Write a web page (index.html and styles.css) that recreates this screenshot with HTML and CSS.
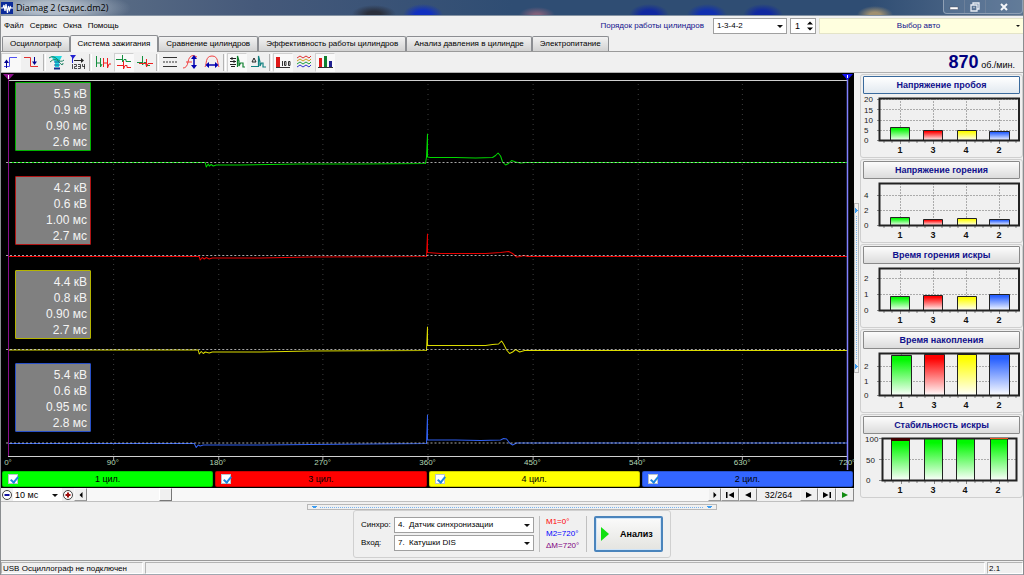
FILE: index.html
```html
<!DOCTYPE html>
<html lang="ru">
<head>
<meta charset="utf-8">
<title>Diamag 2 (сздис.dm2)</title>
<link rel="stylesheet" href="styles.css">
</head>
<body>
<div class="window">
  <header class="titlebar">
    <svg class="app-icon" viewBox="0 0 12 12" aria-hidden="true"><rect width="12" height="12" fill="#0a2a9a"/><path d="M0 6H2L3 3 4 9 5 2 6.500 11 7.500 4 8.500 8 9.500 5 10 6H12" fill="none" stroke="#fff" stroke-width="1.200"/></svg>
    <h1 class="title">Diamag 2 (сздис.dm2)</h1>
    <div class="win-buttons">
      <button class="win-btn" aria-label="Свернуть"><svg viewBox="0 0 12 12"><rect x="2" y="6" width="8" height="2.500" fill="#fff" stroke="#445" stroke-width=".4"/></svg></button>
      <button class="win-btn" aria-label="Развернуть"><svg viewBox="0 0 12 12"><path d="M4 4V2H10V8H8M2 4H8V10H2ZM4.500 6.500H5.500" fill="none" stroke="#e8edf4" stroke-width="1.300"/></svg></button>
      <button class="win-btn win-close" aria-label="Закрыть"><svg viewBox="0 0 12 12"><path d="M3 3L9 9M9 3L3 9" stroke="#f4f6fa" stroke-width="2"/></svg></button>
    </div>
  </header>

  <div class="menubar">
    <nav class="menu">
      <a href="#file">Файл</a><a href="#service">Сервис</a><a href="#windows">Окна</a><a href="#help">Помощь</a>
    </nav>
    <label class="order-label" for="order">Порядок работы цилиндров</label>
    <span class="combo combo-order"><select id="order"><option>1-3-4-2</option></select></span>
    <span class="spinner"><input type="text" value="1" aria-label="Номер цилиндра"><svg viewBox="0 0 8 12" aria-hidden="true"><path d="M1 4.500L4 1.500 7 4.500ZM1 7.500L4 10.500 7 7.500Z"/></svg></span>
    <button class="car-btn">Выбор авто</button>
  </div>

  <div class="tabs" role="tablist">
    <button class="tab" role="tab">Осциллограф</button>
    <button class="tab tab-active" role="tab" aria-selected="true">Система зажигания</button>
    <button class="tab" role="tab">Сравнение цилиндров</button>
    <button class="tab" role="tab">Эффективность работы цилиндров</button>
    <button class="tab" role="tab">Анализ давления в цилиндре</button>
    <button class="tab" role="tab">Электропитание</button>
  </div>

  <div class="toolbar">
    <button class="tool pressed" aria-label="Передний фронт"><svg viewBox="0 0 18 16"><path d="M2 12.500H7.500V3.500H15" fill="none" stroke="#5050f0"/><path d="M4.500 14V8" stroke="#000090"/><path d="M2 9L4.500 5.500 7 9Z" fill="#000090"/></svg></button>
    <button class="tool" aria-label="Задний фронт"><svg viewBox="0 0 18 16"><path d="M1 3.500H7.500V12.500H15" fill="none" stroke="#e03030"/><path d="M11.500 3V8" stroke="#000090"/><path d="M9 7.500L11.500 11 14 7.500Z" fill="#000090"/></svg></button>
    <span class="sep"></span>
    <button class="tool" aria-label="Синхронизация"><svg viewBox="0 0 18 16"><path d="M3 2H14L11 8V13H7V8Z" fill="#20d8e0"/><path d="M1 4Q5 1 9 5T16 6M2 8Q7 3 11 8T15 9" fill="none" stroke="#188060"/><path d="M6 8H12M6 11H12" stroke="#1060a0"/><path d="M6 14.500H12" stroke="#103090" stroke-width="2"/></svg></button>
    <button class="tool" aria-label="Порядок 1234"><svg viewBox="0 0 18 16"><path d="M1 1H7L4 5Z" fill="#2020d0"/><path d="M3.500 4V9" stroke="#2020d0"/><path d="M5 6.500H13" stroke="#222"/><path d="M12 4L15 6.500 12 9Z" fill="#222"/><path d="M3.500 10V15M5 10.500H7.500V12.500H5.500V14.500H8M9 10.500H11.500V14.500H9M9 12.500H11.500M13.500 10V12.500H16M15.500 10V15" fill="none" stroke="#222" stroke-width=".8"/></svg></button>
    <span class="sep"></span>
    <button class="tool" aria-label="Последовательно"><svg viewBox="0 0 18 16"><path d="M2.500 13V2M2.500 9H6.500M6.500 4V13L8 10" fill="none" stroke="#159040"/><path d="M9.500 13V4M9.500 9H13.500M13.500 4V14L15 10H17" fill="none" stroke="#f02020"/></svg></button>
    <button class="tool pressed" aria-label="Друг под другом"><svg viewBox="0 0 18 16"><path d="M1 5.500H7.500V1V8L9 5.500H11V7.500H16" fill="none" stroke="#159040"/><path d="M2 11.500H8.500V7V15L10 11.500H12V13.500H16" fill="none" stroke="#f02020"/></svg></button>
    <button class="tool" aria-label="Наложение"><svg viewBox="0 0 18 16"><path d="M1 8.500H6.500V2V11L8 8.500H10V11.500H14" fill="none" stroke="#159040"/><path d="M3 9.500H10.500V5V13L12 9.500H17" fill="none" stroke="#f02020"/></svg></button>
    <span class="sep"></span>
    <button class="tool" aria-label="Линии"><svg viewBox="0 0 18 16"><path d="M2 3.500H16M2 12.500H16" stroke="#333"/><path d="M2 8H16" stroke="#333" stroke-dasharray="2 1"/></svg></button>
    <button class="tool" aria-label="Масштаб по высоте"><svg viewBox="0 0 18 16"><path d="M1 14Q5 14 6 8T11 1.500Q13 2 15 3M4 8H10" fill="none" stroke="#f04040"/><path d="M12 3V13" stroke="#0000b0" stroke-width="1.500"/><path d="M9 5L12 1 15 5ZM9 11L12 15 15 11Z" fill="#0000b0"/></svg></button>
    <button class="tool" aria-label="Масштаб по ширине"><svg viewBox="0 0 18 16"><path d="M2 13C4 10 2 2 9 2S14 10 16 13" fill="none" stroke="#f04040"/><path d="M5 11H13" stroke="#0000b0" stroke-width="1.500"/><path d="M6 8L2.500 11 6 14ZM12 8L15.500 11 12 14Z" fill="#0000b0"/></svg></button>
    <span class="sep"></span>
    <button class="tool pressed" aria-label="Значения"><svg viewBox="0 0 18 16"><path d="M9.500 13V2L11 7V12L12.500 9H15V13H17" fill="none" stroke="#108030" stroke-width="1.200"/><path d="M2 4.500H8M2 7.500H8M4 3V6M6 6V9M2 10.500H8M3 12.500H7" fill="none" stroke="#222"/></svg></button>
    <button class="tool" aria-label="Разность"><svg viewBox="0 0 18 16"><path d="M2 12.500H9.500V2L11 8V12L12.500 9H14V13H17" fill="none" stroke="#108080" stroke-width="1.200"/><path d="M3 8L5 4 7 8Z" fill="none" stroke="#222"/></svg></button>
    <span class="sep"></span>
    <button class="tool pressed" aria-label="Таблица"><svg viewBox="0 0 18 16"><path d="M2 3H6V13H2Z" fill="#e01818"/><path d="M2 13.500H16M8.500 7V12M10.500 7.500H12V11.500H10.500ZM14.500 7.500V11.500H16V7.500Z" fill="none" stroke="#333"/></svg></button>
    <button class="tool" aria-label="Волны"><svg viewBox="0 0 18 16"><g fill="none"><path d="M2 4L5 2 8 4 11 2 14 4 16 2" stroke="#e03030"/><path d="M2 7L5 5 8 7 11 5 14 7 16 5" stroke="#d0a020"/><path d="M2 10L5 8 8 10 11 8 14 10 16 8" stroke="#20a040"/><path d="M2 13L5 11 8 13 11 11 14 13 16 11" stroke="#3030d0"/></g></svg></button>
    <button class="tool pressed" aria-label="Диаграммы"><svg viewBox="0 0 18 16"><rect x="3" y="4" width="3" height="9" fill="#e01818"/><rect x="8" y="2" width="3" height="11" fill="#108030"/><rect x="13" y="7" width="3" height="6" fill="#202090"/><path d="M2 13.500H17" stroke="#333"/></svg></button>
    <p class="rpm"><strong>870</strong> об./мин.</p>
  </div>

  <main class="main">
    <section class="left">
      <div class="scope">
        <svg class="plot" viewBox="1 73 852 397" preserveAspectRatio="none" aria-hidden="true">
          <path d="M113.500 84V460M218.500 84V460M322.500 84V460M427.500 84V460M532.500 84V460M637.500 84V460M741.500 84V460" stroke="#3c3c3c" stroke-dasharray="1 4"/>
          <path d="M8 80.500H847M8 456.500H847" stroke="#d0d0d0"/>
          <path d="M113.500 457V460M218.500 457V460M322.500 457V460M427.500 457V460M532.500 457V460M637.500 457V460M741.500 457V460" stroke="#aaa"/>
          <g fill="none" stroke-linejoin="round">
            <path stroke="#00d800" d="M8 162.500H205L206 167 208 164 209 166 211 164.500 213 166 216 165H240L300 164H360L425 163.500 426 157 427 134V157L430 157.500H455L475 158 492 157.500 495 155.500 497.500 153 500 156 502 162 505 165 508 163.500 511 160.500 515 162 520 163 525 162.500H847"/>
            <path stroke="#e80000" d="M8 256.500H199L200 260 202 257.500 204 259 206 257.500 209 259 212 258H260L310 257 426 256.500 427 234V252.500L440 253.500H485L500 252.500 508 251.500 512 253.500 516 257 520 256.500 523 255.500 527 256.500H847"/>
            <path stroke="#dcdc00" d="M8 350H198L199 354 201 351.500 203 353.500 205 352 209 353 212 352H260L310 351 426 350.500 427 327V345.500H485L492 344.500 498 344 501 341 503 344 506 350 509 353.500 512 352 515 349.500 519 352 524 350.500H847"/>
            <path stroke="#3060f0" d="M8 443.500H194L196 447.500 198 445 200 446 203 445H260L310 444.500 426 443.500 427 415V440H455L480 440.500 500 440 503 438.500 506 439 509 443 512 445 516 443H847"/>
          </g>
          <path d="M6 162.500H847M6 255.500H847M6 349.500H847M6 443H847" stroke="#ddd" stroke-dasharray="2 2" stroke-opacity=".75"/>
          <path d="M8.500 77V456" stroke="#8c108c"/><path d="M3 74H14L8.500 80Z" fill="#8c108c"/><path d="M8.500 75V79" stroke="#fff"/>
          <path d="M846.500 79V470" stroke="#8080ff" stroke-width="1.500"/><path d="M841 74H852L846.500 80Z" fill="#1010f0"/><path d="M846.500 75V78" stroke="#fff"/>
        </svg>
        <div class="readouts">
          <div class="slot"><p class="readout c1">5.5 кВ<br>0.9 кВ<br>0.90 мс<br>2.6 мс</p></div>
          <div class="slot"><p class="readout c3">4.2 кВ<br>0.6 кВ<br>1.00 мс<br>2.7 мс</p></div>
          <div class="slot"><p class="readout c4">4.4 кВ<br>0.8 кВ<br>0.90 мс<br>2.7 мс</p></div>
          <div class="slot"><p class="readout c2">5.4 кВ<br>0.6 кВ<br>0.95 мс<br>2.8 мс</p></div>
        </div>
        <div class="axis"><span>0°</span><span>90°</span><span>180°</span><span>270°</span><span>360°</span><span>450°</span><span>540°</span><span>630°</span><span>720°</span></div>
      </div>
      <div class="cylinders">
        <label class="cyl cyl1"><input type="checkbox" checked><span>1 цил.</span></label>
        <label class="cyl cyl3"><input type="checkbox" checked><span>3 цил.</span></label>
        <label class="cyl cyl4"><input type="checkbox" checked><span>4 цил.</span></label>
        <label class="cyl cyl2"><input type="checkbox" checked><span>2 цил.</span></label>
      </div>
      <div class="player">
        <button class="round" aria-label="Уменьшить"><svg viewBox="0 0 12 12"><circle cx="6" cy="6" r="4.500" fill="#fff" stroke="#444"/><path d="M3.500 6H8.500" stroke="#1010a0" stroke-width="2"/></svg></button>
        <span class="combo combo-scale"><select aria-label="Развёртка"><option>10 мс</option></select></span>
        <button class="round" aria-label="Увеличить"><svg viewBox="0 0 12 12"><circle cx="6" cy="6" r="4.500" fill="#fff" stroke="#444"/><path d="M3.500 6H8.500M6 3.500V8.500" stroke="#a01010" stroke-width="2"/></svg></button>
        <button class="step" aria-label="Влево"><svg viewBox="0 0 12 12"><path d="M7.500 3L4.500 6 7.500 9Z"/></svg></button>
        <div class="track"><span class="thumb"></span></div>
        <button class="step" aria-label="Вправо"><svg viewBox="0 0 12 12"><path d="M4.500 3L7.500 6 4.500 9Z"/></svg></button>
        <button class="step wide" aria-label="В начало"><svg viewBox="0 0 12 12"><path d="M2 3H3.500V9H2ZM10 3L4.500 6 10 9Z"/></svg></button>
        <button class="step wide" aria-label="Назад"><svg viewBox="0 0 12 12"><path d="M9 3L3 6 9 9Z"/></svg></button>
        <output class="frame">32/264</output>
        <button class="step wide" aria-label="Вперёд"><svg viewBox="0 0 12 12"><path d="M3 3L9 6 3 9Z"/></svg></button>
        <button class="step wide" aria-label="В конец"><svg viewBox="0 0 12 12"><path d="M8.500 3H10V9H8.500ZM2 3L7.500 6 2 9Z"/></svg></button>
        <button class="step wide" aria-label="Пуск"><svg viewBox="0 0 12 12"><path d="M3 3L9 6 3 9Z" fill="#108a10"/></svg></button>
      </div>
    </section>

    <div class="vsplit"><i class="vgrip"></i></div>

    <svg class="defs" aria-hidden="true"><defs>
      <linearGradient id="g1" x2="0" y2="1"><stop offset=".1" stop-color="#00f800"/><stop offset="1" stop-color="#fff"/></linearGradient>
      <linearGradient id="g3" x2="0" y2="1"><stop offset=".1" stop-color="#ff0000"/><stop offset="1" stop-color="#fff"/></linearGradient>
      <linearGradient id="g4" x2="0" y2="1"><stop offset=".1" stop-color="#ffff00"/><stop offset="1" stop-color="#fff"/></linearGradient>
      <linearGradient id="g2" x2="0" y2="1"><stop offset=".1" stop-color="#2860ff"/><stop offset="1" stop-color="#fff"/></linearGradient>
    </defs></svg>

    <aside class="side">
      <section class="group">
        <button class="group-btn focused">Напряжение пробоя</button>
        <svg class="chart" viewBox="0 0 160 62">
          <path class="grid" d="M19 5.500H158M19 15.500H158M19 26.500H158M19 36.500H158M39.500 4V46M72.500 4V46M105.500 4V46M138.500 4V46"/>
          <path class="ticks" d="M16 5.500H19M16 15.500H19M16 26.500H19M16 36.500H19M16 46.500H19M23 47V49M31 47V49M39.500 47V50M48 47V49M56 47V49M64 47V49M72.500 47V50M81 47V49M89 47V49M97 47V49M105.500 47V50M114 47V49M122 47V49M130 47V49M138.500 47V50M147 47V49M155 47V49"/>
          <g class="bars"><path fill="url(#g1)" d="M29.500 33.500h19v13h-19z"/><path fill="url(#g3)" d="M62.500 36.500h19v10h-19z"/><path fill="url(#g4)" d="M96.500 36.500h19v10h-19z"/><path fill="url(#g2)" d="M128.500 37.500h20v9h-20z"/></g>
          <path class="frame-line" d="M18.500 4.500H158V46.500H18.500Z"/>
          <g class="yt"><text x="3" y="8">20</text><text x="3" y="19">15</text><text x="3" y="29">10</text><text x="3" y="39">5</text><text x="3" y="49">0</text></g>
          <g class="xt"><text x="39" y="59">1</text><text x="72" y="59">3</text><text x="105" y="59">4</text><text x="138" y="59">2</text></g>
        </svg>
      </section>
      <section class="group">
        <button class="group-btn">Напряжение горения</button>
        <svg class="chart" viewBox="0 0 160 62">
          <path class="grid" d="M19 16.500H158M19 31.500H158M39.500 4V46M72.500 4V46M105.500 4V46M138.500 4V46"/>
          <path class="ticks" d="M16 16.500H19M16 31.500H19M16 46.500H19M23 47V49M31 47V49M39.500 47V50M48 47V49M56 47V49M64 47V49M72.500 47V50M81 47V49M89 47V49M97 47V49M105.500 47V50M114 47V49M122 47V49M130 47V49M138.500 47V50M147 47V49M155 47V49"/>
          <g class="bars"><path fill="url(#g1)" d="M29.500 38.500h19v8h-19z"/><path fill="url(#g3)" d="M62.500 40.500h19v6h-19z"/><path fill="url(#g4)" d="M96.500 39.500h19v7h-19z"/><path fill="url(#g2)" d="M128.500 40.500h20v6h-20z"/></g>
          <path class="frame-line" d="M18.500 4.500H158V46.500H18.500Z"/>
          <g class="yt"><text x="3" y="19">4</text><text x="3" y="34">2</text><text x="3" y="49">0</text></g>
          <g class="xt"><text x="39" y="59">1</text><text x="72" y="59">3</text><text x="105" y="59">4</text><text x="138" y="59">2</text></g>
        </svg>
      </section>
      <section class="group">
        <button class="group-btn">Время горения искры</button>
        <svg class="chart" viewBox="0 0 160 62">
          <path class="grid" d="M19 14.500H158M19 30.500H158M39.500 4V46M72.500 4V46M105.500 4V46M138.500 4V46"/>
          <path class="ticks" d="M16 14.500H19M16 30.500H19M16 46.500H19M23 47V49M31 47V49M39.500 47V50M48 47V49M56 47V49M64 47V49M72.500 47V50M81 47V49M89 47V49M97 47V49M105.500 47V50M114 47V49M122 47V49M130 47V49M138.500 47V50M147 47V49M155 47V49"/>
          <g class="bars"><path fill="url(#g1)" d="M29.500 32.500h19v14h-19z"/><path fill="url(#g3)" d="M62.500 31.500h19v15h-19z"/><path fill="url(#g4)" d="M96.500 32.500h19v14h-19z"/><path fill="url(#g2)" d="M128.500 30.500h20v16h-20z"/></g>
          <path class="frame-line" d="M18.500 4.500H158V46.500H18.500Z"/>
          <g class="yt"><text x="3" y="17">2</text><text x="3" y="33">1</text><text x="3" y="49">0</text></g>
          <g class="xt"><text x="39" y="59">1</text><text x="72" y="59">3</text><text x="105" y="59">4</text><text x="138" y="59">2</text></g>
        </svg>
      </section>
      <section class="group">
        <button class="group-btn">Время накопления</button>
        <svg class="chart" viewBox="0 0 160 62">
          <path class="grid" d="M19 17.500H158M19 32.500H158M40.500 4V46M73.500 4V46M105.500 4V46M138.500 4V46"/>
          <path class="ticks" d="M16 17.500H19M16 32.500H19M16 46.500H19M24 47V49M32 47V49M40.500 47V50M48 47V49M56 47V49M64 47V49M73.500 47V50M81 47V49M89 47V49M97 47V49M105.500 47V50M114 47V49M122 47V49M130 47V49M138.500 47V50M147 47V49M155 47V49"/>
          <g class="bars"><path fill="url(#g1)" d="M30.500 6.500h20v40h-20z"/><path fill="url(#g3)" d="M63.500 5.500h20v41h-20z"/><path fill="url(#g4)" d="M96.500 5.500h19v41h-19z"/><path fill="url(#g2)" d="M128.500 5.500h20v41h-20z"/></g>
          <path class="frame-line" d="M18.500 4.500H158V46.500H18.500Z"/>
          <g class="yt"><text x="3" y="20">2</text><text x="3" y="35">1</text><text x="3" y="49">0</text></g>
          <g class="xt"><text x="40" y="59">1</text><text x="73" y="59">3</text><text x="105" y="59">4</text><text x="138" y="59">2</text></g>
        </svg>
      </section>
      <section class="group">
        <button class="group-btn">Стабильность искры</button>
        <svg class="chart" viewBox="0 0 160 62">
          <path class="grid" d="M21 25.500H156"/>
          <path class="ticks" d="M18 4.500H21M18 25.500H21M18 46.500H21M24 47V49M32 47V49M40.500 47V50M48 47V49M56 47V49M64 47V49M73.500 47V50M81 47V49M89 47V49M97 47V49M105.500 47V50M114 47V49M122 47V49M130 47V49M138.500 47V50M147 47V49"/>
          <g class="bars"><path fill="url(#g1)" d="M30.500 5.500h18v41h-18z"/><path fill="url(#g1)" d="M63.500 4.500h18v42h-18z"/><path fill="url(#g1)" d="M95.500 4.500h18v42h-18z"/><path fill="url(#g1)" d="M129.500 4.500h17v42h-17z"/></g>
          <path class="frame-line" d="M21.500 4.500H155.500V46.500H21.500Z"/>
          <path d="M30 5.500H49" stroke="#400000" stroke-width="3"/><path d="M129 4.500H147" stroke="#f05020"/>
          <g class="yt"><text x="4" y="8">100</text><text x="5" y="29">50</text><text x="5" y="49">0</text></g>
          <g class="xt"><text x="39" y="59">1</text><text x="72" y="59">3</text><text x="104" y="59">4</text><text x="137" y="59">2</text></g>
        </svg>
      </section>
    </aside>
  </main>

  <section class="bottom">
    <div class="hgrip"></div>
    <form class="settings">
      <div class="fields">
        <label for="sync">Синхро:</label>
        <span class="combo"><select id="sync"><option>4.&nbsp; Датчик синхронизации</option></select></span>
        <label for="input">Вход:</label>
        <span class="combo"><select id="input"><option>7.&nbsp; Катушки DIS</option></select></span>
      </div>
      <div class="markers"><span class="m1">M1=0°</span><span class="m2">M2=720°</span><span class="dm">ΔM=720°</span></div>
      <button type="button" class="analyze"><svg viewBox="0 0 8 14" aria-hidden="true"><path d="M0 0L8 7 0 14Z" fill="#10e010"/></svg>Анализ</button>
    </form>
  </section>

  <footer class="status"><span class="cell cell-usb">USB Осциллограф не подключен</span><span class="cell cell-fill"></span><span class="cell cell-ver">2.1</span></footer>
</div>
</body>
</html>
```
FILE: styles.css
```css
* { box-sizing: border-box; }
body {
  margin: 0;
  background: #f0f0f0;
  color: #000;
  font: 9px/12px "Liberation Sans", Arial, sans-serif;
}
h1, p { margin: 0; }
button, select, input { font: inherit; color: inherit; }
button { padding: 0; }
svg { display: block; }

.window {
  display: flex;
  flex-direction: column;
  min-height: 100vh;
  border-left: 1px solid #8a8d90;
  border-right: 1px solid #8a8d90;
}

/* Title bar */
.titlebar {
  display: flex;
  align-items: center;
  gap: 3px;
  height: 16px;
  border-bottom: 1px solid #8593a3;
  background:
    radial-gradient(ellipse 80px 18px at 50px 8px, rgba(190, 200, 212, .85) 30%, transparent 100%),
    radial-gradient(ellipse 22px 9px at 373px 14px, #2a2f3c 30%, transparent),
    radial-gradient(ellipse 20px 11px at 422px 15px, #1030c0 40%, transparent),
    radial-gradient(ellipse 18px 8px at 536px 15px, #80607a 20%, transparent),
    radial-gradient(ellipse 20px 11px at 648px 15px, #1028a0 40%, transparent),
    radial-gradient(ellipse 20px 11px at 706px 15px, #1030b0 40%, transparent),
    radial-gradient(ellipse 20px 11px at 762px 15px, #1028a0 40%, transparent),
    radial-gradient(ellipse 18px 9px at 874px 15px, #a09070 30%, transparent),
    linear-gradient(90deg, #66788c, #45597a 25%, #2f4d73 50%, #2f4d73 85%, #5a7290);
}
.app-icon { width: 12px; height: 12px; }
.title {
  flex: 1;
  font: 9px/12px "Open Sans", "Noto Sans", sans-serif;
}
.win-buttons {
  display: flex;
  align-self: flex-start;
  height: 14px;
  border: 1px solid #8fa0b5;
  border-top: 0;
  border-radius: 0 0 4px 4px;
}
.win-btn {
  width: 21px;
  display: grid;
  place-items: center;
  border: 0;
  border-right: 1px solid #6c809a;
  background: rgba(120, 145, 175, .3);
}
.win-btn svg { width: 12px; height: 12px; }
.win-close { width: 36px; border-right: 0; }

/* Menu row */
.menubar { display: flex; align-items: center; gap: 3px; height: 19px; font-size: 8px; }
.menu { display: flex; gap: 6px; flex: 1; padding-left: 3px; }
.menu a { color: inherit; text-decoration: none; }
.order-label { margin-right: 6px; color: #10108c; }

.combo { position: relative; display: flex; height: 16px; }
.combo select {
  width: 100%;
  height: 100%;
  padding: 0 3px;
  border: 1px solid #a0a0a0;
  border-radius: 0;
  background: #fff;
  appearance: none;
}
.combo::after {
  content: "";
  position: absolute;
  right: 4px;
  top: 50%;
  margin-top: -1px;
  border: 3px solid transparent;
  border-top-color: #111;
  border-bottom-width: 0;
  pointer-events: none;
}
.combo-order { width: 74px; }
.spinner {
  display: flex;
  align-items: center;
  width: 26px;
  height: 16px;
  border: 1px solid #a0a0a0;
  background: #fff;
}
.spinner input { width: 15px; padding: 0 0 0 4px; border: 0; background: none; font-size: 9px; }
.spinner svg { width: 8px; height: 12px; }
.car-btn {
  position: relative;
  width: 204px;
  height: 16px;
  padding-right: 6px;
  border: 1px solid #e4e4c8;
  border-right: 0;
  background: #ffffdf;
  color: #10108c;
}
.car-btn::after {
  content: "";
  position: absolute;
  right: 3px;
  top: 6px;
  border: 2px solid transparent;
  border-top-color: #111;
  border-bottom-width: 0;
}

/* Tabs */
.tabs { display: flex; align-items: flex-end; height: 16px; padding-left: 1px; font-size: 8px; }
.tab {
  height: 15px;
  padding: 0 7px;
  border: 1px solid #8c8e92;
  border-bottom: 0;
  border-radius: 2px 2px 0 0;
  background: linear-gradient(#f2f2f2, #d2d2d2);
  white-space: nowrap;
}
.tab-active { height: 17px; margin-bottom: -1px; background: #f4f4f4; position: relative; }

/* Toolbar */
.toolbar {
  display: flex;
  align-items: center;
  gap: 1px;
  height: 22px;
  border-top: 1px solid #9a9a9a;
  border-bottom: 1px solid #b0b0b0;
}
.tool {
  display: grid;
  place-items: center;
  width: 20px;
  height: 19px;
  border: 1px solid transparent;
  background: none;
}
.tool svg { width: 18px; height: 16px; }
.pressed { background: #f9f9f9; border-color: #d0d0d0 transparent transparent #d0d0d0; }
.sep { width: 3px; height: 17px; border-left: 1px solid #b4b4b4; border-right: 1px solid #fff; }
.rpm { flex: 1; padding-right: 8px; text-align: right; }
.rpm strong { font-size: 18px; line-height: 20px; color: #000080; }

/* Main area */
.main { display: flex; flex: 1; }
.left { display: flex; flex-direction: column; flex: 1; min-width: 0; }
.scope { position: relative; display: flex; flex-direction: column; flex: 1; background: #000; }
.plot { position: absolute; inset: 0; width: 100%; height: 100%; }
.readouts {
  position: relative;
  display: grid;
  grid-template-rows: repeat(4, 1fr);
  flex: 1;
  padding: 9px 0 0 14px;
}
.readout {
  width: 76px;
  padding: 3px 3px 0 0;
  border: 1px solid;
  border-radius: 1px;
  background: #808080;
  color: #f4f4f4;
  font-size: 12px;
  line-height: 16px;
  text-align: right;
}
.c1 { border-color: #00b400; }
.c3 { border-color: #b01414; }
.c4 { border-color: #b4b400; }
.c2 { border-color: #2850c8; }
.axis {
  position: relative;
  display: flex;
  justify-content: space-between;
  height: 13px;
  padding: 0 7px;
  color: #b4d8b4;
  font-size: 8px;
}
.axis span { display: flex; justify-content: center; width: 0; }

.cylinders {
  display: grid;
  grid-template-columns: repeat(4, 1fr);
  gap: 2px;
  padding: 1px;
  background: #000;
}
.cyl {
  display: grid;
  grid-template-columns: 10px 1fr 10px;
  align-items: center;
  height: 16px;
  padding: 0 5px;
  border: 1px solid rgba(0, 0, 0, .2);
  border-radius: 2px;
  text-align: center;
}
.cyl input {
  position: relative;
  width: 10px;
  height: 10px;
  margin: 0;
  border: 1px solid #b8c4cc;
  background: #fff;
  appearance: none;
}
.cyl input:checked::before {
  content: "";
  position: absolute;
  left: 3px;
  top: 0;
  width: 3px;
  height: 6px;
  border: solid #1e86e0;
  border-width: 0 2px 2px 0;
  transform: rotate(40deg);
}
.cyl1 { background: #00ff00; }
.cyl3 { background: #ff0000; }
.cyl4 { background: #ffff00; }
.cyl2 { background: #3366ff; }

.player {
  display: flex;
  height: 14px;
  border-bottom: 1px solid #c0c0c0;
  background: #f8f8f8;
}
.player svg { width: 12px; height: 12px; }
.round { display: grid; place-items: center; width: 12px; border: 0; background: #f0f0f0; }
.combo-scale { width: 49px; height: 13px; }
.combo-scale select { padding: 0 2px; border: 0; }
.step {
  display: grid;
  place-items: center;
  width: 13px;
  border: 1px solid #f8f8f8;
  border-right-color: #888;
  border-bottom-color: #999;
  background: #f0f0f0;
}
.wide { width: 18px; }
.track { display: flex; flex: 1; padding-left: 72px; }
.thumb { width: 13px; border: 1px solid #fff; border-right-color: #777; border-bottom-color: #777; background: #f0f0f0; }
.frame { width: 43px; background: #f0f0f0; line-height: 14px; text-align: center; }

/* Splitters */
.vsplit { display: flex; align-items: center; width: 6px; }
.vgrip {
  width: 5px;
  height: 170px;
  border: 1px solid #b8b8b8;
  background:
    conic-gradient(from 225deg at 100% 50%, #3c9cf0 90deg, transparent 0) 0 4px / 3px 5px no-repeat,
    conic-gradient(from 225deg at 100% 50%, #3c9cf0 90deg, transparent 0) 0 160px / 3px 5px no-repeat,
    repeating-linear-gradient(#78b4f0 0 1px, transparent 1px 2px) center / 1px 144px no-repeat;
}
.hgrip {
  width: 410px;
  height: 6px;
  border: 1px solid #b8b8b8;
  background:
    conic-gradient(from 135deg at 50% 0, transparent 0 0) 0 0 / 0 0 no-repeat,
    linear-gradient(#3c9cf0, #3c9cf0) 4px 1px / 5px 1px no-repeat,
    linear-gradient(#3c9cf0, #3c9cf0) 5px 2px / 3px 1px no-repeat,
    linear-gradient(#3c9cf0, #3c9cf0) 399px 1px / 5px 1px no-repeat,
    linear-gradient(#3c9cf0, #3c9cf0) 400px 2px / 3px 1px no-repeat,
    repeating-linear-gradient(90deg, #78b4f0 0 1px, transparent 1px 2px) center / 384px 1px no-repeat;
}

/* Side charts */
.defs { position: absolute; width: 0; height: 0; }
.side { display: flex; flex-direction: column; gap: 1px; width: 163px; padding-top: 1px; }
.group {
  height: 84px;
  padding: 1px 0;
  border: 1px solid #cfcfcf;
  border-radius: 3px;
}
.group-btn {
  display: block;
  width: 157px;
  height: 18px;
  margin: 0 auto;
  border: 1px solid #8a8a8a;
  border-radius: 1px;
  background: linear-gradient(#fcfcfc, #ececec 50%, #dcdcdc);
  color: #10108c;
  font-weight: bold;
}
.focused { border-color: #3a6a9c; background: linear-gradient(#fff, #e2e9f0); }
.chart { width: 160px; height: 62px; }
.grid { fill: none; stroke: #ababab; stroke-dasharray: 2 1; }
.ticks { fill: none; stroke: #888; }
.bars path { stroke: #222; }
.frame-line { fill: none; stroke: #222; stroke-width: 2; }
.yt { font-size: 8px; fill: #222; }
.xt { font-size: 9px; font-weight: bold; text-anchor: middle; fill: #111; }

/* Bottom panel */
.bottom {
  display: flex;
  flex-direction: column;
  align-items: center;
  height: 59px;
  padding-top: 2px;
  border-bottom: 1px solid #9a9a9a;
}
.settings {
  display: flex;
  align-items: center;
  height: 48px;
  padding: 0 7px;
  border: 1px solid #d0d0d0;
  border-radius: 3px;
  font-size: 8px;
}
.fields { display: grid; grid-template-columns: 29px 140px; gap: 2px 4px; align-items: center; }
.markers {
  display: flex;
  flex-direction: column;
  width: 48px;
  margin: 0 7px 0 5px;
  padding-left: 6px;
  border-left: 1px solid #c0c0c0;
  border-right: 1px solid #c0c0c0;
}
.m1 { color: #ff0000; }
.m2 { color: #0000ff; }
.dm { color: #800080; }
.analyze {
  display: flex;
  align-items: center;
  gap: 11px;
  width: 69px;
  height: 36px;
  padding-left: 5px;
  border: 2px solid #4a84bc;
  border-radius: 2px;
  background: linear-gradient(#fafafa, #e4e4e0);
  box-shadow: inset 0 0 0 1px #cfe4f8;
  font-size: 9px;
  font-weight: bold;
}
.analyze svg { width: 8px; height: 14px; }

/* Status bar */
.status { display: flex; gap: 2px; height: 14px; border-bottom: 1px solid #a0a8b0; padding-top: 1px; font-size: 8px; }
.cell { border: 1px solid #b4b4b4; border-right-color: #fff; border-bottom-color: #fff; padding-left: 1px; line-height: 11px; white-space: nowrap; }
.cell-usb { width: 142px; }
.cell-fill { flex: 1; }
.cell-ver { width: 36px; }
```
